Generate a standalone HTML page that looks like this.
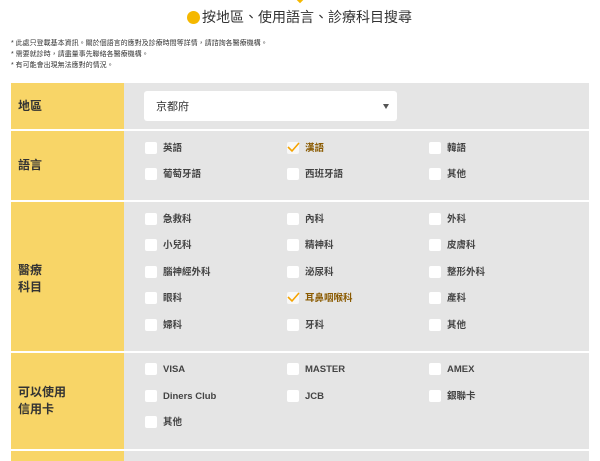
<!DOCTYPE html>
<html><head><meta charset="utf-8"><style>
*{margin:0;padding:0;box-sizing:border-box}
body{width:600px;height:456px;overflow:hidden;background:#fff;font-family:"Liberation Sans","Noto Sans CJK TC",sans-serif;color:#333;position:relative}
.a{position:absolute}
.lab{position:absolute;left:11px;width:113px;background:#f8d567;}
.cel{position:absolute;left:124px;width:465px;background:#e5e5e5}
.lt{position:absolute;left:7px;font-size:12px;font-weight:bold;color:#333;line-height:17px}
.cb{position:absolute;width:12px;height:12px;background:#fff;border-radius:2px}
.t{position:absolute;font-size:9.5px;font-weight:bold;color:#444;line-height:12px;white-space:nowrap}
.n{position:absolute;left:11px;font-size:7px;color:#333;white-space:nowrap}
</style></head><body>
<div class="a" style="left:297px;top:-4px;width:6px;height:6px;background:#f5b800;transform:rotate(45deg)"></div>
<div class="a" style="left:187px;top:11px;width:13px;height:13px;border-radius:50%;background:#f5b800"></div>
<div class="a" style="left:202px;top:7px;font-size:14px;color:#333;white-space:nowrap">按地區、使用語言、診療科目搜尋</div>
<div class="n" style="top:38px">* 此處只登載基本資訊。關於個語言的應對及診療時間等詳情，請諮詢各醫療機構。</div>
<div class="n" style="top:49px">* 需要就診時，請盡量事先聯絡各醫療機構。</div>
<div class="n" style="top:60px">* 有可能會出現無法應對的情況。</div>

<div class="lab" style="top:83px;height:46px"><div class="lt" style="top:15px">地區</div></div>
<div class="cel" style="top:83px;height:46px"></div>
<div class="a" style="left:144px;top:91px;width:253px;height:30px;background:#fff;border-radius:3px"></div>
<div class="a" style="left:156px;top:98px;font-size:11px;color:#333">京都府</div>
<div class="a" style="left:383px;top:104px;width:0;height:0;border-left:3px solid transparent;border-right:3px solid transparent;border-top:5px solid #555"></div>

<div class="lab" style="top:131px;height:69px"><div class="lt" style="top:26px">語言</div></div>
<div class="cel" style="top:131px;height:69px"></div>

<div class="lab" style="top:202px;height:149px"><div class="lt" style="top:60px">醫療<br>科目</div></div>
<div class="cel" style="top:202px;height:149px"></div>

<div class="lab" style="top:353px;height:96px"><div class="lt" style="top:31px">可以使用<br>信用卡</div></div>
<div class="cel" style="top:353px;height:96px"></div>

<div class="lab" style="top:451px;height:10px"></div>
<div class="cel" style="top:451px;height:10px"></div>

<div id="boxes"></div>
<script>
var rows=[
[142,["英語","漢語*","韓語"]],[168,["葡萄牙語","西班牙語","其他"]],
[213,["急救科","內科","外科"]],[239,["小兒科","精神科","皮膚科"]],[266,["腦神經外科","泌尿科","整形外科"]],[292,["眼科","耳鼻咽喉科*","產科"]],[319,["婦科","牙科","其他"]],
[363,["VISA","MASTER","AMEX"]],[390,["Diners Club","JCB","銀聯卡"]],[416,["其他"]]];
var xs=[145,287,429],h="";
rows.forEach(function(r){r[1].forEach(function(s,i){var c=s.slice(-1)=="*";if(c)s=s.slice(0,-1);
if(!c)h+='<div class="cb" style="left:'+xs[i]+'px;top:'+r[0]+'px"></div>';
else h+='<div class="cb" style="left:'+xs[i]+'px;top:'+r[0]+'px;background:#f8f8f8"></div><svg class="a" style="left:'+(xs[i]-1)+'px;top:'+(r[0]-2)+'px" width="14" height="14"><path d="M2 7 L6 11 L13 3" fill="none" stroke="#f5a300" stroke-width="1.6"/></svg>';
h+='<div class="t" style="left:'+(xs[i]+18)+'px;top:'+(r[0]+1)+'px;'+(c?'color:#8a5a00':'')+'">'+s+'</div>';});});
document.getElementById("boxes").innerHTML=h;
</script>
</body></html>
